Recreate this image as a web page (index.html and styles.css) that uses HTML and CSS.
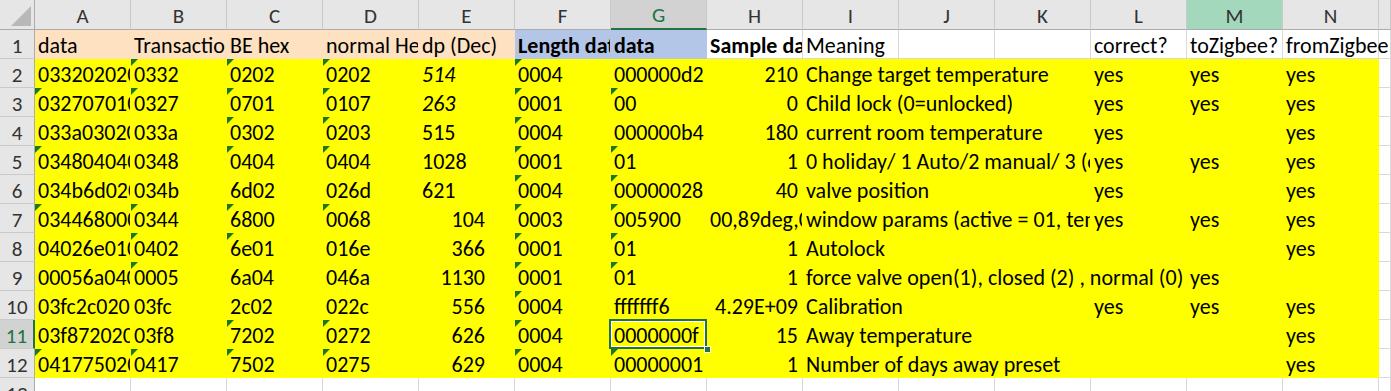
FILE: index.html
```html
<!DOCTYPE html>
<html>
<head>
<meta charset="utf-8">
<link rel="stylesheet" href="styles.css">
</head>
<body>
<div class="sheet">
  <!-- column headers -->
  <div class="corner"><svg width="35" height="30" viewBox="0 0 35 30"><polygon points="11,26 31,26 31,6" fill="#b8b8b8"/></svg></div>
  <div class="ch">A</div><div class="ch">B</div><div class="ch">C</div><div class="ch">D</div><div class="ch">E</div><div class="ch">F</div>
  <div class="ch ch-sel">G</div><div class="ch">H</div><div class="ch">I</div><div class="ch">J</div><div class="ch">K</div><div class="ch">L</div>
  <div class="ch ch-m">M</div><div class="ch">N</div><div class="ch"></div>

  <!-- row 1 -->
  <div class="rh">1</div>
  <div class="c pe">data</div><div class="c pe">Transaction</div><div class="c pe">BE hex</div><div class="c pe">normal Hex</div><div class="c pe">dp (Dec)</div>
  <div class="c bl b">Length data</div><div class="c bl b">data</div><div class="c b">Sample data</div><div class="c">Meaning</div>
  <div class="c"></div><div class="c"></div><div class="c">correct?</div><div class="c">toZigbee?</div><div class="c ov">fromZigbee</div><div class="c"></div>

  <!-- row 2 -->
  <div class="rh">2</div>
  <div class="c y">0332020200040000000d2</div><div class="c y t">0332</div><div class="c y t">0202</div><div class="c y t">0202</div><div class="c y i">514</div>
  <div class="c y t">0004</div><div class="c y">000000d2</div><div class="c y r">210</div><div class="c y s3">Change target temperature</div>
  <div class="c y">yes</div><div class="c y">yes</div><div class="c y">yes</div><div class="c"></div>

  <!-- row 3 -->
  <div class="rh">3</div>
  <div class="c y t">03270701000100</div><div class="c y t">0327</div><div class="c y t">0701</div><div class="c y t">0107</div><div class="c y i">263</div>
  <div class="c y t">0001</div><div class="c y t">00</div><div class="c y r">0</div><div class="c y s3">Child lock (0=unlocked)</div>
  <div class="c y">yes</div><div class="c y">yes</div><div class="c y">yes</div><div class="c"></div>

  <!-- row 4 -->
  <div class="rh">4</div>
  <div class="c y">033a0302000400000b4</div><div class="c y">033a</div><div class="c y t">0302</div><div class="c y t">0203</div><div class="c y">515</div>
  <div class="c y t">0004</div><div class="c y">000000b4</div><div class="c y r">180</div><div class="c y s3">current room temperature</div>
  <div class="c y">yes</div><div class="c y"></div><div class="c y">yes</div><div class="c"></div>

  <!-- row 5 -->
  <div class="rh">5</div>
  <div class="c y t">03480404000101</div><div class="c y">0348</div><div class="c y t">0404</div><div class="c y t">0404</div><div class="c y">1028</div>
  <div class="c y t">0001</div><div class="c y t">01</div><div class="c y r">1</div><div class="c y s3">0 holiday/ 1 Auto/2 manual/ 3 (comfort)</div>
  <div class="c y">yes</div><div class="c y">yes</div><div class="c y">yes</div><div class="c"></div>

  <!-- row 6 -->
  <div class="rh">6</div>
  <div class="c y">034b6d020004000028</div><div class="c y">034b</div><div class="c y">6d02</div><div class="c y">026d</div><div class="c y">621</div>
  <div class="c y t">0004</div><div class="c y t">00000028</div><div class="c y r">40</div><div class="c y s3">valve position</div>
  <div class="c y">yes</div><div class="c y"></div><div class="c y">yes</div><div class="c"></div>

  <!-- row 7 -->
  <div class="rh">7</div>
  <div class="c y t">034468000003005900</div><div class="c y t">0344</div><div class="c y t">6800</div><div class="c y t">0068</div><div class="c y re">104</div>
  <div class="c y t">0003</div><div class="c y t">005900</div><div class="c y">00,89deg,0min</div><div class="c y s3">window params (active = 01, temp, time)</div>
  <div class="c y">yes</div><div class="c y">yes</div><div class="c y">yes</div><div class="c"></div>

  <!-- row 8 -->
  <div class="rh">8</div>
  <div class="c y">04026e01000101</div><div class="c y t">0402</div><div class="c y t">6e01</div><div class="c y">016e</div><div class="c y re">366</div>
  <div class="c y t">0001</div><div class="c y t">01</div><div class="c y r">1</div><div class="c y s3">Autolock</div>
  <div class="c y"></div><div class="c y"></div><div class="c y">yes</div><div class="c"></div>

  <!-- row 9 -->
  <div class="rh">9</div>
  <div class="c y">00056a04000101</div><div class="c y t">0005</div><div class="c y">6a04</div><div class="c y">046a</div><div class="c y re">1130</div>
  <div class="c y t">0001</div><div class="c y t">01</div><div class="c y r">1</div><div class="c y s4">force valve open(1), closed (2) , normal (0)</div>
  <div class="c y">yes</div><div class="c y"></div><div class="c"></div>

  <!-- row 10 -->
  <div class="rh">10</div>
  <div class="c y">03fc2c020004fffffff6</div><div class="c y">03fc</div><div class="c y">2c02</div><div class="c y">022c</div><div class="c y re">556</div>
  <div class="c y t">0004</div><div class="c y">fffffff6</div><div class="c y r">4.29E+09</div><div class="c y s3">Calibration</div>
  <div class="c y">yes</div><div class="c y">yes</div><div class="c y">yes</div><div class="c"></div>

  <!-- row 11 -->
  <div class="rh rh-sel">11</div>
  <div class="c y">03f87202000400000f</div><div class="c y">03f8</div><div class="c y t">7202</div><div class="c y t">0272</div><div class="c y re">626</div>
  <div class="c y t">0004</div><div class="c y sel">0000000f</div><div class="c y r">15</div><div class="c y s3">Away temperature</div>
  <div class="c y"></div><div class="c y"></div><div class="c y">yes</div><div class="c"></div>

  <!-- row 12 -->
  <div class="rh">12</div>
  <div class="c y t">041775020004000001</div><div class="c y t">0417</div><div class="c y t">7502</div><div class="c y t">0275</div><div class="c y re">629</div>
  <div class="c y t">0004</div><div class="c y t">00000001</div><div class="c y r">1</div><div class="c y s3">Number of days away preset</div>
  <div class="c y"></div><div class="c y"></div><div class="c y">yes</div><div class="c"></div>

  <!-- row 13 -->
  <div class="rh">13</div>
  <div class="c"></div><div class="c"></div><div class="c"></div><div class="c"></div><div class="c"></div><div class="c"></div><div class="c"></div>
  <div class="c"></div><div class="c"></div><div class="c"></div><div class="c"></div><div class="c"></div><div class="c"></div><div class="c"></div><div class="c"></div>
</div>
</body>
</html>
```
FILE: styles.css
```css
html, body {
  margin: 0;
  padding: 0;
  background: #ffffff;
  overflow: hidden;
}

.sheet {
  display: grid;
  grid-template-columns: 35px repeat(14, 96px) 1fr;
  grid-template-rows: 30px;
  grid-auto-rows: 29px;
  width: 1391px;
  font-family: Carlito, Lato, "Liberation Sans", sans-serif;
  font-size: 22px;
  color: #000;
}

.sheet > div {
  box-sizing: border-box;
  min-width: 0;
}

.corner {
  background: #e6e6e6;
  border-right: 1px solid #ababab;
  border-bottom: 1px solid #ababab;
}
.corner svg { display: block; }

.ch {
  background: #e6e6e6;
  border-right: 1px solid #c9c9c9;
  border-bottom: 1px solid #ababab;
  color: #333;
  display: flex;
  align-items: center;
  justify-content: center;
  font-size: 21px;
  padding-top: 2px;
}
.ch-sel {
  background: #d2d2d2;
  color: #217346;
  border-bottom: 2px solid #217346;
}
.ch-m {
  background: #a3d8bd;
}

.rh {
  background: #e6e6e6;
  border-right: 1px solid #ababab;
  border-bottom: 1px solid #c9c9c9;
  color: #333;
  display: flex;
  align-items: center;
  justify-content: center;
  font-size: 21px;
  padding-top: 3px;
}
.rh-sel {
  background: #d2d2d2;
  color: #217346;
  border-right: 2px solid #217346;
}

.c {
  border-right: 1px solid #d9d9d9;
  border-bottom: 1px solid #d9d9d9;
  display: flex;
  align-items: flex-end;
  padding: 0 3px 0 3px;
  white-space: nowrap;
  overflow: hidden;
  line-height: 24px;
  position: relative;
}

.y { background: #ffff00; border-color: #ffff00; }
.pe { background: #fde1c0; border-color: #fde1c0; }
.bl { background: #b4c6e7; border-color: #b4c6e7; }
.b { font-weight: bold; }
.i { font-style: italic; }
.r { justify-content: flex-end; padding-right: 4px; }
.re { justify-content: flex-end; padding-right: 29px; }
.ov { overflow: visible; }
.s3 { grid-column: span 3; }
.s4 { grid-column: span 4; }

.t::before {
  content: "";
  position: absolute;
  top: 0;
  left: 0;
  width: 0;
  height: 0;
  border-top: 7px solid #1a7a1a;
  border-right: 7px solid transparent;
}

.sel {
  overflow: visible;
  z-index: 2;
}
.sel::after {
  content: "";
  position: absolute;
  top: -1px;
  left: -2px;
  right: -1px;
  bottom: -1px;
  border: 2px solid #217346;
  box-shadow: inset 0 0 0 1px #ffffff;
}
.sel::before {
  content: "";
  position: absolute;
  right: -5px;
  bottom: -5px;
  width: 5px;
  height: 5px;
  background: #217346;
  border: 1px solid #ffffff;
  z-index: 3;
}
```
